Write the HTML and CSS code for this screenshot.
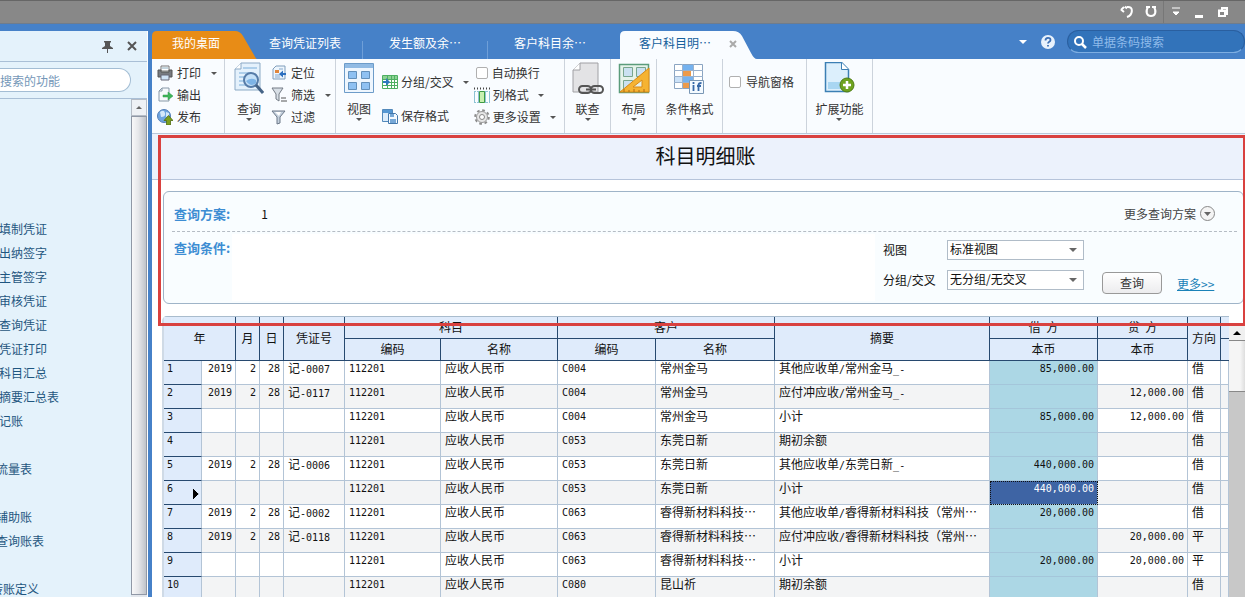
FILE: index.html
```html
<!DOCTYPE html>
<html lang="zh-CN">
<head>
<meta charset="utf-8">
<title>科目明细账</title>
<link rel="stylesheet" href="styles.css">
</head>
<body>
<header class="titlebar">
  <button class="win win-undo" aria-label="撤销"><svg width="14" height="14" viewBox="0 0 14 14"><path d="M1 5l3-3M1 4.500l3 2.500M5 1.500l2 2M7 2c7-1 6 8 0 10" fill="none" stroke="#fff" stroke-width="2"/></svg></button>
  <button class="win" aria-label="吸附"><svg width="14" height="14" viewBox="0 0 14 14"><path d="M2 2h4M8 2h4M4 2C1 7 3 11 7 11s6-4 3-9" fill="none" stroke="#fff" stroke-width="2"/></svg></button>
  <button class="win win-sep" aria-label="选项"><svg width="14" height="14" viewBox="0 0 14 14"><path d="M3 3h8M4 7h6l-3 3z" fill="#fff" stroke="#fff"/></svg></button>
  <button class="win" aria-label="最小化"><svg width="14" height="14" viewBox="0 0 14 14"><path d="M3 10h8v3H3z" fill="#fff"/></svg></button>
  <button class="win" aria-label="还原"><svg width="14" height="14" viewBox="0 0 14 14"><path d="M6 5V3h5v6H9M3 5.500h6v5.500H3zM3 6h6" fill="none" stroke="#fff" stroke-width="2"/></svg></button>
</header>
<div class="workspace">
  <aside class="sidebar">
    <div class="side-head">
      <button class="plain" aria-label="固定"><svg width="13" height="13" viewBox="0 0 13 13"><path d="M3 1h7v1L9 3v3l3 2v1H1V8l3-2V3L3 2zM6 9h1v4H6z" fill="#555"/></svg></button>
      <button class="plain" aria-label="关闭"><svg width="10" height="10" viewBox="0 0 10 10"><path d="M1 1l8 8M9 1L1 9" stroke="#555" stroke-width="2"/></svg></button>
    </div>
    <div class="side-search"><input type="text" aria-label="搜索" placeholder="搜索的功能"></div>
    <div class="side-body">
      <nav class="side-nav">
        <ul class="nav-a">
          <li><a href="#">填制凭证</a></li><li><a href="#">出纳签字</a></li><li><a href="#">主管签字</a></li><li><a href="#">审核凭证</a></li><li><a href="#">查询凭证</a></li><li><a href="#">凭证打印</a></li><li><a href="#">科目汇总</a></li><li><a href="#">摘要汇总表</a></li><li><a href="#">记账</a></li>
        </ul>
        <ul class="nav-b"><li><a href="#">流量表</a></li></ul>
        <ul class="nav-b"><li><a href="#">辅助账</a></li><li><a href="#">查询账表</a></li></ul>
        <ul class="nav-c"><li><a href="#">转账定义</a></li></ul>
      </nav>
      <div class="side-scroll"><span class="scroll-btn"><i class="tri-up"></i></span><span class="side-thumb"></span></div>
    </div>
  </aside>
  <main class="main">
    <div class="tabbar">
      <button class="tab tab-home">
        <svg class="tab-shape" viewBox="0 0 105 28" preserveAspectRatio="none"><path d="M0 28V5Q0 0 5 0H83Q88 0 91 5L102 24Q104 28 105 28z" fill="#e88c16"/></svg>
        <span>我的桌面</span></button>
      <button class="tab tab-list"><span>查询凭证列表</span></button>
      <button class="tab tab-plain"><span>发生额及余⋯</span></button>
      <button class="tab tab-last"><span>客户科目余⋯</span></button>
      <button class="tab tab-active">
        <svg class="tab-shape" viewBox="0 0 137 28" preserveAspectRatio="none"><path d="M0 28V5Q0 0 5 0H113Q119 0 122 5L131 22Q134 28 137 28z" fill="#f9fcff"/></svg>
        <span>客户科目明⋯</span>
        <svg class="tab-x" width="8" height="8" viewBox="0 0 8 8"><path d="M1 1l6 6M7 1L1 7" stroke="#aaa" stroke-width="2"/></svg></button>
      <div class="tab-tools">
        <i class="tri-down white"></i>
        <button class="plain" aria-label="帮助"><svg width="16" height="16" viewBox="0 0 16 16"><circle cx="8" cy="8" r="7" fill="#e8f2fc"/><path d="M5.500 6.500c0-3.500 5-3.500 5-.5 0 2-2.500 1.500-2.500 3.500M8 11v1.600" fill="none" stroke="#3c6fb4" stroke-width="1.800"/></svg></button>
        <label class="code-search"><svg width="14" height="14" viewBox="0 0 14 14"><circle cx="6" cy="6" r="4" fill="none" stroke="#fff" stroke-width="2"/><path d="M9 9l4 4" stroke="#fff" stroke-width="2.500"/></svg><input type="text" aria-label="单据条码搜索" placeholder="单据条码搜索"></label>
      </div>
    </div>
    <div class="ribbon">
      <div class="group g-print">
        <button class="cmd"><svg width="16" height="16" viewBox="0 0 16 16"><path d="M4 1h8v5H4z" fill="#fff" stroke="#777"/><path d="M1 5h3v2h8V5h3v7H1z" fill="#777a80" stroke="#555"/><path d="M4 10h8v5H4z" fill="#cfe2f6" stroke="#667"/><path d="M5 3h6" stroke="#8ab"/></svg>打印<i class="tri-down gap"></i></button>
        <button class="cmd"><svg width="16" height="16" viewBox="0 0 16 16"><path d="M2 4l3-3h7v13H2z" fill="#f6f9fc" stroke="#8899a8"/><path d="M2 4h3V1" fill="none" stroke="#8899a8"/><path d="M6 8h5V5l5 4-5 4v-3H6z" fill="#3fb55a" stroke="#2d9a4a" stroke-width=".5"/></svg>输出</button>
        <button class="cmd"><svg width="16" height="16" viewBox="0 0 16 16"><circle cx="7" cy="7" r="6.500" fill="#6fa5e0" stroke="#527db5"/><path d="M3 3q4-3 5 1t-4 4zM9 3l3 1v3l-3 1z" fill="#d5e8fa"/><path d="M11.500 6.500l4.500 5h-2.500V16h-4v-4.500H7z" fill="#7b9f1f" stroke="#4f6c10" stroke-width=".8"/></svg>发布</button>
      </div>
      <div class="group g-query">
        <button class="big"><svg width="30" height="34" viewBox="0 0 30 34"><path d="M1 7l6-6h19v27H1z" fill="#e4f1fc" stroke="#8ba9c5"/><path d="M1 7h6V1" fill="#fff" stroke="#8ba9c5"/><path d="M9 6h14M5 11h12M5 15h6M5 19h5M5 23h6" stroke="#9cc4e5" stroke-width="1.500"/><circle cx="17" cy="18" r="7" fill="#c5e1f8" stroke="#567ca8" stroke-width="2"/><path d="M12 19q5-4 10-1v3q-5 5-10-2" fill="#7eb4e6"/><path d="M22 23l7 8" stroke="#466487" stroke-width="3"/></svg><span>查询</span><i class="tri-down"></i></button>
        <div class="stack">
          <button class="cmd"><svg width="16" height="16" viewBox="0 0 16 16"><path d="M2 4l3-3h9v13H2z" fill="#eef6fd" stroke="#7f9dbb"/><path d="M4 5h4v3H4z" fill="#e0863c"/><path d="M4 10h5M4 12h5M8 4h4" stroke="#87a9cc"/><path d="M15 9h-4" stroke="#2d70c0" stroke-width="2"/><path d="M12 5.500L8 9l4 3.500z" fill="#2d70c0"/></svg>定位</button>
          <button class="cmd"><svg width="16" height="16" viewBox="0 0 16 16"><path d="M1 1h11L8 7v7l-3-2V7z" fill="#d8dfe6" stroke="#747c86"/><path d="M10 11h5M10 14h6" stroke="#555"/></svg>筛选<i class="tri-down gap"></i></button>
          <button class="cmd"><svg width="16" height="16" viewBox="0 0 16 16"><path d="M1 2h13L9 8v6l-3 1V8z" fill="#c5d1de" stroke="#6c7888"/><path d="M4 3h6L8 7z" fill="#fff"/></svg>过滤</button>
        </div>
      </div>
      <div class="group g-view">
        <button class="big"><svg width="30" height="34" viewBox="0 0 30 34"><path d="M.5 1.500h29v29H.5z" fill="#eef6fe" stroke="#6d9cc9"/><path d="M1 2h28v4H1z" fill="#91bbe4"/><path d="M4.500 9.500h8v7h-8zM17.500 9.500h8v7h-8zM4.500 20.500h8v7h-8zM17.500 20.500h8v7h-8z" fill="#8fc1f2" stroke="#6390bb"/></svg><span>视图</span><i class="tri-down"></i></button>
        <div class="stack stack-two">
          <button class="cmd"><svg width="16" height="16" viewBox="0 0 16 16"><path d="M.5 1.500h15v13H.5z" fill="#fff" stroke="#4eaf62"/><path d="M1 2h14v3H1z" fill="#8dd394"/><path d="M5.500 1v14M9.500 1v14M12.500 1v14M1 5.500h14M1 8.500h14M1 11.500h14" stroke="#4eaf62"/><path d="M1 7h3V4l4 4-4 4V9H1z" fill="#2f78c0"/></svg>分组/交叉<i class="tri-down gap"></i></button>
          <button class="cmd"><svg width="16" height="16" viewBox="0 0 16 16"><path d="M.5 1.500h10v12H.5z" fill="#dcecfb" stroke="#5389bb"/><path d="M1 2h9v3H1z" fill="#5597d3"/><path d="M6.500 5.500h7l2 2v8h-9z" fill="#f5faff" stroke="#4478ac"/><path d="M8 6h4v3H8zM8 11h6v4H8z" fill="#77a8d7"/></svg>保存格式</button>
        </div>
        <div class="stack stack-set">
          <label class="cmd"><input type="checkbox">自动换行</label>
          <button class="cmd"><svg width="16" height="16" viewBox="0 0 16 16"><path d="M0 1.500h16" stroke="#444" stroke-width="2" stroke-dasharray="1 2"/><path d="M.5 4v12M15.500 4v12M4.500 4v12M11.500 4v12" stroke="#8fc3d4"/><path d="M0 4.500h16M0 15.500h16" stroke="#8fc3d4" stroke-dasharray="2 1"/><path d="M5.500 4.500h5v11h-5z" fill="#c9f0b0" stroke="#3e9a44"/></svg>列格式<i class="tri-down gap"></i></button>
          <button class="cmd"><svg width="16" height="16" viewBox="0 0 16 16"><circle cx="8" cy="8" r="6.800" fill="none" stroke="#8c8c8c" stroke-width="2" stroke-dasharray="2.670 2.670"/><circle cx="8" cy="8" r="5.500" fill="#e6e6e6" stroke="#9a9a9a"/><circle cx="8" cy="8" r="2.500" fill="#fff" stroke="#888"/></svg>更多设置<i class="tri-down gap"></i></button>
        </div>
      </div>
      <div class="group g-one">
        <button class="big"><svg width="32" height="34" viewBox="0 0 32 34"><path d="M1 8l7-7h18v29H1z" fill="#e3e3e5" stroke="#a0a0a4"/><path d="M1 8h7V1" fill="#fff" stroke="#a0a0a4"/><g fill="none" stroke="#555" stroke-width="2"><rect x="7" y="24" width="12" height="7" rx="3.500"/><rect x="19" y="24" width="12" height="7" rx="3.500"/></g><path d="M14 27.500h10" stroke="#555" stroke-width="2"/></svg><span>联查</span><i class="tri-down"></i></button>
      </div>
      <div class="group g-one">
        <button class="big"><svg width="32" height="34" viewBox="0 0 32 34"><path d="M1.500 2.500h29v28h-29z" fill="#e6f3ea" stroke="#5b9c7b" stroke-width="1.500"/><path d="M5.500 5.500h9v9h-9zM18.500 5.500h9v9h-9zM5.500 18.500h9v9h-9z" fill="#cbe1f1" stroke="#79a68e"/><path d="M31 6v24H2z" fill="#f5b332" stroke="#d88917"/><path d="M24 18v7h-9z" fill="#e4f1e8" stroke="#d88917"/><path d="M6 30v-3M11 30v-2M16 30v-3M21 30v-2M26 30v-3" stroke="#b06b12"/></svg><span>布局</span><i class="tri-down"></i></button>
      </div>
      <div class="group g-cond">
        <button class="big"><svg width="30" height="34" viewBox="0 0 30 34"><path d="M.5 2.500h28v24H.5z" fill="#fff" stroke="#8ba5c2"/><path d="M9 3h10v5H9zM9 15h10v5H9z" fill="#75b2ef"/><path d="M9 9h8v5H9zM9 21h8v5H9z" fill="#ec9a4b"/><path d="M1 15h8v5H1z" fill="#cce2f8"/><path d="M8.500 2v25M19.500 2v25M0 8.500h29M0 14.500h29M0 20.500h29" stroke="#9bb2cd"/><path d="M15.500 18.500h14v13h-14z" fill="#f4faff" stroke="#7a97b5"/><path d="M19.500 23v6M19.500 20v2M23 24h4M24.500 29v-6q0-2 3-2" fill="none" stroke="#3768a7" stroke-width="1.800"/></svg><span>条件格式</span><i class="tri-down"></i></button>
      </div>
      <div class="group g-nav"><label class="cmd"><input type="checkbox">导航窗格</label></div>
      <div class="group g-ext">
        <button class="big"><svg width="32" height="34" viewBox="0 0 32 34"><path d="M2.500.5h16l7 7v22h-23z" fill="#dceffc" stroke="#3c7fb4" stroke-width="1.500"/><path d="M18.500.5v7h7" fill="#fff" stroke="#3c7fb4"/><path d="M5 20h18v7H5z" fill="#a9d6f2"/><circle cx="24" cy="23" r="7" fill="#6fa31f" stroke="#4e7d13"/><path d="M24 19v8M20 23h8" stroke="#fff" stroke-width="2.500"/></svg><span>扩展功能</span><i class="tri-down"></i></button>
      </div>
    </div>
    <section class="report">
      <h1>科目明细账</h1>
      <form class="panel">
        <div class="plan">
          <b>查询方案:</b><span class="plan-no">1</span>
          <button type="button" class="more-plan">更多查询方案<svg width="15" height="15" viewBox="0 0 15 15"><circle cx="7.500" cy="7.500" r="7" fill="#f4f4f4" stroke="#888"/><path d="M4 6h7l-3.500 4z" fill="#666"/></svg></button>
        </div>
        <div class="cond">
          <b>查询条件:</b>
          <div class="cond-area"></div>
          <div class="fields">
            <label for="view">视图</label><span class="pick"><select id="view"><option>标准视图</option></select></span>
            <label for="cross">分组/交叉</label><span class="pick"><select id="cross"><option>无分组/无交叉</option></select></span>
          </div>
          <button type="button" class="go">查询</button>
          <a class="more" href="#">更多&gt;&gt;</a>
        </div>
      </form>
      <div class="frame"></div>
    </section>
    <div class="grid-wrap">
      <table class="grid">
        <colgroup><col class="c38"><col class="c34"><col class="c24"><col class="c24"><col class="c61"><col class="c96"><col class="c117"><col class="c98"><col class="c119"><col><col class="c108"><col class="c90"><col class="c33"><col class="c8"></colgroup>
        <thead>
          <tr><th colspan="2" rowspan="2">年</th><th rowspan="2">月</th><th rowspan="2">日</th><th rowspan="2">凭证号</th><th colspan="2">科目</th><th colspan="2">客户</th><th rowspan="2">摘要</th><th>借&nbsp; 方</th><th>贷&nbsp; 方</th><th rowspan="2">方向</th><th></th></tr>
          <tr><th>编码</th><th>名称</th><th>编码</th><th>名称</th><th>本币</th><th>本币</th><th></th></tr>
        </thead>
        <tbody>
          <tr><th>1</th><td class="n">2019</td><td class="n">2</td><td class="n">28</td><td>记<span class="m">-0007</span></td><td class="m">112201</td><td>应收人民币</td><td class="m">C004</td><td>常州金马</td><td>其他应收单<span class="m">/</span>常州金马<span class="m">_-</span></td><td class="n hot">85,000.00</td><td class="n"></td><td>借</td><td></td></tr>
          <tr><th>2</th><td class="n">2019</td><td class="n">2</td><td class="n">28</td><td>记<span class="m">-0117</span></td><td class="m">112201</td><td>应收人民币</td><td class="m">C004</td><td>常州金马</td><td>应付冲应收<span class="m">/</span>常州金马<span class="m">_-</span></td><td class="n hot"></td><td class="n">12,000.00</td><td>借</td><td></td></tr>
          <tr><th>3</th><td></td><td></td><td></td><td></td><td class="m">112201</td><td>应收人民币</td><td class="m">C004</td><td>常州金马</td><td>小计</td><td class="n hot">85,000.00</td><td class="n">12,000.00</td><td>借</td><td></td></tr>
          <tr><th>4</th><td></td><td></td><td></td><td></td><td class="m">112201</td><td>应收人民币</td><td class="m">C053</td><td>东莞日新</td><td>期初余额</td><td class="n hot"></td><td class="n"></td><td>借</td><td></td></tr>
          <tr><th>5</th><td class="n">2019</td><td class="n">2</td><td class="n">28</td><td>记<span class="m">-0006</span></td><td class="m">112201</td><td>应收人民币</td><td class="m">C053</td><td>东莞日新</td><td>其他应收单<span class="m">/</span>东莞日新<span class="m">_-</span></td><td class="n hot">440,000.00</td><td class="n"></td><td>借</td><td></td></tr>
          <tr><th class="current">6</th><td></td><td></td><td></td><td></td><td class="m">112201</td><td>应收人民币</td><td class="m">C053</td><td>东莞日新</td><td>小计</td><td class="n hot selected">440,000.00</td><td class="n"></td><td>借</td><td></td></tr>
          <tr><th>7</th><td class="n">2019</td><td class="n">2</td><td class="n">28</td><td>记<span class="m">-0002</span></td><td class="m">112201</td><td>应收人民币</td><td class="m">C063</td><td>睿得新材料科技⋯</td><td>其他应收单<span class="m">/</span>睿得新材料科技（常州⋯</td><td class="n hot">20,000.00</td><td class="n"></td><td>借</td><td></td></tr>
          <tr><th>8</th><td class="n">2019</td><td class="n">2</td><td class="n">28</td><td>记<span class="m">-0118</span></td><td class="m">112201</td><td>应收人民币</td><td class="m">C063</td><td>睿得新材料科技⋯</td><td>应付冲应收<span class="m">/</span>睿得新材料科技（常州⋯</td><td class="n hot"></td><td class="n">20,000.00</td><td>平</td><td></td></tr>
          <tr><th>9</th><td></td><td></td><td></td><td></td><td class="m">112201</td><td>应收人民币</td><td class="m">C063</td><td>睿得新材料科技⋯</td><td>小计</td><td class="n hot">20,000.00</td><td class="n">20,000.00</td><td>平</td><td></td></tr>
          <tr><th>10</th><td></td><td></td><td></td><td></td><td class="m">112201</td><td>应收人民币</td><td class="m">C080</td><td>昆山祈</td><td>期初余额</td><td class="n hot"></td><td class="n"></td><td>借</td><td></td></tr>
        </tbody>
      </table>
      <div class="grid-scroll"><span class="gs-btn"><i class="tri-up black"></i></span><span class="gs-thumb"></span><span class="gs-track"></span></div>
    </div>
  </main>
</div>
</body>
</html>
```
FILE: styles.css
```css
* { box-sizing: border-box; }
body {
  margin: 0;
  height: 100vh;
  overflow: hidden;
  display: flex;
  flex-direction: column;
  font: 12px/16px "Noto Sans CJK SC", sans-serif;
  color: #111;
  background: #4681c8;
}
button, input, select { font: inherit; color: inherit; }
button { border: 0; padding: 0; background: none; }
svg { flex: none; display: block; }
ul { list-style: none; margin: 0; padding: 0; }
a { text-decoration: none; }
h1 { margin: 0; font-weight: normal; }

.tri-down, .tri-up {
  flex: none;
  border: 3px solid transparent;
  width: 0;
  height: 0;
}
.tri-down { border-top-color: #555; border-bottom: 0; }
.tri-up { border-bottom-color: #666; border-top: 0; }
.tri-down.white { border-width: 4px 4px 0; border-top-color: #fff; }
.tri-up.black { border-width: 0 4px 4px; border-bottom-color: #000; }

.titlebar {
  flex: none;
  height: 24px;
  display: flex;
  justify-content: flex-end;
  align-items: stretch;
  padding-right: 10px;
  background: #888;
  border-top: 1px solid #666;
  border-bottom: 1px solid #6f7c8c;
}
.win { width: 24px; display: flex; align-items: center; justify-content: center; }
.win-sep { border-left: 1px solid #777; }

.workspace { flex: 1; min-height: 0; display: flex; gap: 4px; }

.sidebar {
  flex: none;
  width: 148px;
  margin-top: 7px;
  display: flex;
  flex-direction: column;
  overflow: hidden;
  background: #e4f2fb;
  border-right: 1px solid #fff;
}
.side-head {
  height: 31px;
  flex: none;
  display: flex;
  align-items: center;
  justify-content: flex-end;
  gap: 13px;
  padding-right: 10px;
  border-bottom: 1px solid #a9bfd6;
}
.side-search { height: 37px; flex: none; padding: 6px 16px 7px 0; border-bottom: 1px solid #a9bfd6; }
.side-search input {
  width: 100%;
  height: 24px;
  padding: 0;
  border: 1px solid #a3bdd4;
  border-left: 0;
  border-radius: 0 12px 12px 0;
  background: #fff;
}
input::placeholder { color: #7597b8; opacity: 1; }
.side-body { flex: 1; min-height: 0; display: flex; justify-content: space-between; }
.side-nav { padding-top: 118px; line-height: 24px; white-space: nowrap; }
.side-nav ul { margin-bottom: 24px; }
.side-nav a { color: #1f5680; }
.nav-a { margin-left: -1px; }
.nav-b { margin-left: -4px; }
.nav-c { margin-left: -9px; }
.side-scroll {
  flex: none;
  width: 16px;
  display: flex;
  flex-direction: column;
  padding-bottom: 2px;
  background: #e2e6ec;
}
.scroll-btn {
  height: 17px;
  display: flex;
  align-items: center;
  justify-content: center;
  border: 1px solid #b5bcc6;
  background: #eef1f5;
}
.side-thumb { flex: 1; border: 1px solid #9098a6; background: linear-gradient(90deg, #f8f8f9, #e6e7ea 45%, #bfc3ca); }

.main { flex: 1; min-width: 0; display: flex; flex-direction: column; }
.tabbar { flex: none; height: 35px; display: flex; align-items: flex-end; }
.tab {
  position: relative;
  flex: none;
  height: 28px;
  padding-bottom: 4px;
  text-align: left;
  color: #fff;
  white-space: nowrap;
}
.tab span { position: relative; }
.tab-shape { position: absolute; inset: 0; width: 100%; height: 100%; }
.tab-home { width: 105px; padding-left: 20px; }
.tab-list { width: 106px; padding-left: 12px; }
.tab-plain { width: 125px; padding-left: 26px; }
.tab-last { width: 132px; padding-left: 26px; }
.tab-list, .tab-plain { background: linear-gradient(#6f9fd8, #6f9fd8) right bottom / 1px 18px no-repeat; }
.tab-active { width: 137px; padding-left: 19px; color: #15609c; }
.tab-x { position: absolute; left: 109px; top: 9px; }
.tab-tools { flex: 1; height: 35px; display: flex; align-items: center; justify-content: flex-end; gap: 13px; }
.plain { display: flex; }
.code-search {
  display: flex;
  align-items: center;
  gap: 5px;
  width: 178px;
  height: 23px;
  margin-left: -2px;
  padding-left: 5px;
  border: 1px solid #2a5f9f;
  border-bottom-color: #7eaee2;
  border-radius: 12px;
  background: #3273ba;
}
.code-search input { width: 130px; padding: 0; border: 0; background: none; }
.code-search input::placeholder { color: #8fbbea; }

.ribbon {
  flex: none;
  height: 75px;
  display: flex;
  background: #f9fcff;
  border-bottom: 1px solid #b9c8da;
  color: #333;
}
.group { display: flex; padding-top: 3px; border-right: 1px solid #ccd3dc; }
.g-print { width: 73px; flex-direction: column; padding-left: 5px; }
.g-query { width: 111px; padding-left: 9px; gap: 7px; }
.g-view { width: 229px; padding-left: 8px; gap: 8px; }
.g-one { width: 46px; justify-content: center; }
.g-cond { width: 66px; justify-content: center; }
.g-nav { width: 84px; padding-left: 4px; padding-top: 12px; }
.g-ext { width: 66px; justify-content: center; }
.stack { display: flex; flex-direction: column; }
.stack-two { gap: 12px; padding-top: 9px; }
.stack-two .cmd, .stack-set .cmd { gap: 3px; }
.cmd { height: 22px; display: flex; align-items: center; gap: 4px; white-space: nowrap; }
.cmd .gap { margin-left: 6px; }
.cmd input {
  appearance: none;
  width: 12px;
  height: 12px;
  margin: 0 1px 0 2px;
  border: 1px solid #b0b0b0;
  border-radius: 2px;
  background: #fff;
}
.stack-set { margin-left: -3px; }
.big { display: flex; flex-direction: column; align-items: center; white-space: nowrap; height: 64px; }
.big span { margin-top: 5px; }
.big .tri-down { margin-top: 1px; }

.report { position: relative; flex: none; background: #fff; padding-bottom: 12px; }
.report h1 {
  height: 46px;
  padding: 8px 0 0 14px;
  font-size: 20px;
  line-height: 28px;
  text-align: center;
  background: #ecf2fc;
  border-bottom: 1px solid #b6c4da;
}
.frame {
  position: absolute;
  inset: 1px 0 -10px 6px;
  border: 3px solid #d9413f;
  border-right-width: 2px;
  pointer-events: none;
  z-index: 2;
}
.panel { margin: 11px 1px 0 11px; border: 1px solid #9fb4c8; border-radius: 6px; background: #f9fdff; }
.panel b { font-size: 13px; font-weight: bold; color: #3d8dd3; }
.plan { display: flex; align-items: center; height: 40px; margin: 0 6px 0 8px; border-bottom: 1px dashed #b5bcc4; padding: 4px 22px 0 2px; }
.plan-no { margin-left: 31px; }
.more-plan { display: flex; align-items: center; gap: 4px; margin-left: auto; color: #444; }
.cond { display: flex; height: 71px; padding: 8px 24px 2px 10px; }
.cond b { width: 58px; }
.cond-area { flex: 1; background: #fff; margin-top: -6px; }
.fields { display: grid; grid-template-columns: 64px 137px; grid-auto-rows: 20px; row-gap: 10px; align-items: center; margin-left: 8px; }
.pick { position: relative; height: 20px; }
.pick::after {
  content: "";
  position: absolute;
  right: 7px;
  top: 8px;
  border: 4px solid transparent;
  border-top-color: #666;
  border-bottom: 0;
  pointer-events: none;
}
.pick select { display: block; appearance: none; width: 100%; height: 20px; padding: 0 2px 2px; border: 1px solid #b0bcc8; background: #fff; line-height: 16px; }
.go {
  width: 60px;
  height: 22px;
  margin: 32px 15px 0 18px;
  border: 1px solid #999;
  border-radius: 4px;
  background: linear-gradient(#fff, #ececee);
  color: #333;
}
.more { width: 42px; margin-top: 36px; color: #1a82b8; text-decoration: underline; }

.grid-wrap {
  flex: 1;
  min-height: 0;
  display: flex;
  overflow: hidden;
  padding-left: 10px;
  background: #fff;
}
.grid {
  flex: 1;
  align-self: flex-start;
  min-width: 0;
  width: 100%;
  table-layout: fixed;
  border-collapse: separate;
  border-spacing: 0;
  border-left: 2px solid #cfdae6;
  border-top: 1px solid #a9bccd;
  border-top-left-radius: 5px;
}
.c38 { width: 38px; } .c34 { width: 34px; } .c24 { width: 24px; } .c61 { width: 61px; }
.c96 { width: 96px; } .c117 { width: 117px; } .c98 { width: 98px; } .c119 { width: 119px; }
.c108 { width: 108px; } .c90 { width: 90px; } .c33 { width: 33px; } .c8 { width: 8px; }
.grid th { font-weight: normal; background: #dfebfb; padding: 0; }
.grid thead th { height: 22px; padding-bottom: 2px; border-right: 1px solid #27496f; border-bottom: 1px solid #27496f; }
.grid thead th:last-child { border-right: 0; }
.grid td, .grid tbody th {
  height: 24px;
  vertical-align: top;
  white-space: nowrap;
  overflow: hidden;
  border-right: 1px solid #b3c4d6;
  border-bottom: 1px solid #b3c4d6;
}
.grid td { padding: 0 0 0 4px; line-height: 14px; }
.grid tbody th { padding-left: 3px; text-align: left; border-bottom-color: #27496f; font: 10px/16px "DejaVu Sans Mono", monospace; }
.grid tr:nth-child(even) td { background: #f3f4f5; }
.grid .m, .grid .n { font: 10px/16px "DejaVu Sans Mono", monospace; }
.grid span.m { line-height: 14px; }
.grid .n { padding: 0 3px 0 0; text-align: right; }
.grid tbody tr td.hot { background: #acd7e5; border-bottom-color: #a4c6da; }
.grid tbody tr td.selected { background: #3e64a4; color: #fff; outline: 1px dotted #111; outline-offset: -1px; }
.grid .current {
  background-image: linear-gradient(to bottom right, #000 50%, transparent 51%), linear-gradient(to top right, #000 50%, transparent 51%);
  background-size: 6px 5px;
  background-position: 29px 13px, 29px 8px;
  background-repeat: no-repeat;
}
.grid-scroll { flex: none; width: 16px; padding-top: 10px; display: flex; flex-direction: column; background: #fff; }
.gs-btn { height: 15px; display: flex; align-items: center; justify-content: center; background: #f0f0f0; border-bottom: 1px solid #888; }
.gs-thumb { height: 51px; background: linear-gradient(90deg, #f5f5f5 70%, #dedede); border-bottom: 1px solid #888; }
.gs-track { flex: 1; background: #c8c8c8; }
```
